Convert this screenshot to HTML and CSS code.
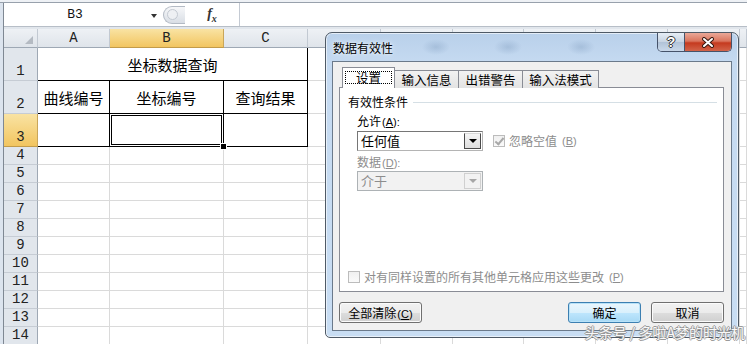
FILE: index.html
```html
<!DOCTYPE html>
<html lang="zh-CN">
<head>
  <meta charset="UTF-8">
  <meta name="viewport" content="width=device-width, initial-scale=1">
  <title>数据有效性</title>
  <link rel="stylesheet" href="styles.css">
</head>
<body>
<div class="app">
  <div class="topline"></div>
  <div class="main">
    <div class="formula">
      <div class="namebox">B3</div>
      <div class="grip"><span class="grip-dot"></span></div>
      <div class="fx"><i>f</i><sub>x</sub></div>
      <div class="input"></div>
    </div>
    <div class="gap"></div>

    <div class="sheet">
      <!-- 列标题 -->
      <div class="hd corner"></div>
      <div class="hd">A</div>
      <div class="hd on">B</div>
      <div class="hd">C</div>
      <div class="hd"></div><div class="hd"></div><div class="hd"></div><div class="hd"></div><div class="hd"></div><div class="hd"></div><div class="hd"></div>

      <!-- 第1行 -->
      <div class="rh">1</div>
      <div class="cell t merged">坐标数据查询</div>
      <div></div><div></div><div></div><div></div><div></div><div></div><div></div>

      <!-- 第2行 -->
      <div class="rh">2</div>
      <div class="cell t">曲线编号</div>
      <div class="cell t">坐标编号</div>
      <div class="cell t">查询结果</div>
      <div></div><div></div><div></div><div></div><div></div><div></div><div></div>

      <!-- 第3行 -->
      <div class="rh on">3</div>
      <div class="cell t"></div>
      <div class="cell t sel"></div>
      <div class="cell t"></div>
      <div></div><div></div><div></div><div></div><div></div><div></div><div></div>

      <div class="rh">4</div><div></div><div></div><div></div><div></div><div></div><div></div><div></div><div></div><div></div><div></div>
      <div class="rh">5</div><div></div><div></div><div></div><div></div><div></div><div></div><div></div><div></div><div></div><div></div>
      <div class="rh">6</div><div></div><div></div><div></div><div></div><div></div><div></div><div></div><div></div><div></div><div></div>
      <div class="rh">7</div><div></div><div></div><div></div><div></div><div></div><div></div><div></div><div></div><div></div><div></div>
      <div class="rh">8</div><div></div><div></div><div></div><div></div><div></div><div></div><div></div><div></div><div></div><div></div>
      <div class="rh">9</div><div></div><div></div><div></div><div></div><div></div><div></div><div></div><div></div><div></div><div></div>
      <div class="rh">10</div><div></div><div></div><div></div><div></div><div></div><div></div><div></div><div></div><div></div><div></div>
      <div class="rh">11</div><div></div><div></div><div></div><div></div><div></div><div></div><div></div><div></div><div></div><div></div>
      <div class="rh">12</div><div></div><div></div><div></div><div></div><div></div><div></div><div></div><div></div><div></div><div></div>
      <div class="rh">13</div><div></div><div></div><div></div><div></div><div></div><div></div><div></div><div></div><div></div><div></div>
      <div class="rh">14</div><div></div><div></div><div></div><div></div><div></div><div></div><div></div><div></div><div></div><div></div>
    </div>
  </div>

  <!-- 数据有效性 对话框 -->
  <div class="dialog">
    <div class="titlebar">
      <span class="title">数据有效性</span>
      <div class="caption-btns">
        <span class="cb help">?</span>
        <span class="cb close">
          <svg width="14" height="11" viewBox="0 0 14 11">
            <path d="M3 2 L11 9 M11 2 L3 9" stroke="#3a1a12" stroke-width="4" stroke-linecap="round"/>
            <path d="M3 2 L11 9 M11 2 L3 9" stroke="#fff" stroke-width="2" stroke-linecap="round"/>
          </svg>
        </span>
      </div>
    </div>

    <div class="client">
      <div class="tabs">
        <span class="tab active"><span class="focus">设置</span></span>
        <span class="tab w4">输入信息</span>
        <span class="tab w4">出错警告</span>
        <span class="tab w5">输入法模式</span>
      </div>

      <div class="panel">
        <div class="group"><span>有效性条件</span><span class="rule"></span></div>
        <div class="fields">
          <div class="label">允许<span class="key">(<u>A</u>):</span></div>
          <div class="field-row">
            <div class="combo"><span class="value">任何值</span><span class="drop"></span></div>
            <div class="check off"><span class="box checked"></span>忽略空值<span class="key">(<u>B</u>)</span></div>
          </div>
          <div class="label off">数据<span class="key">(<u>D</u>):</span></div>
          <div class="combo off"><span class="value">介于</span><span class="drop"></span></div>
        </div>
        <div class="check off apply"><span class="box"></span>对有同样设置的所有其他单元格应用这些更改<span class="key">(<u>P</u>)</span></div>
      </div>

      <div class="buttons">
        <button class="btn wide">全部清除<span class="key">(<u>C</u>)</span></button>
        <button class="btn default">确定</button>
        <button class="btn">取消</button>
      </div>
    </div>
  </div>

  <div class="watermark">头条号 / 多啦A梦的时光机</div>
</div>
</body>
</html>
```

FILE: styles.css
```css
body {
  margin: 0;
  background: #fff;
}

.app {
  position: relative;
  width: 747px;
  height: 344px;
  overflow: hidden;
  background: #dce4ee;
  font-family: "Noto Sans CJK SC", sans-serif;
}

/* --- 编辑栏 --- */
.topline {
  height: 2px;
  background: #eef1f5;
  border-bottom: 1px solid #98a1ac;
}

.main {
  margin-left: 3px;
  border-left: 1px solid #7f8893;
  background: #fff;
}

.formula {
  display: flex;
  align-items: center;
  height: 23px;
  background: #fff;
  border-bottom: 1px solid #b7bec7;
}

.namebox {
  position: relative;
  width: 142px;
  padding-right: 14px;
  text-align: center;
  font: 13px "Liberation Mono", monospace;
  color: #111;
}

.namebox::after {
  content: "";
  position: absolute;
  right: 3px;
  top: 7px;
  border-left: 3px solid transparent;
  border-right: 3px solid transparent;
  border-top: 4px solid #333;
}

.grip {
  width: 22px;
  height: 18px;
  margin-left: 3px;
  border: 1px solid #b3bac4;
  border-right: none;
  border-radius: 10px 0 0 10px;
  background: linear-gradient(#f6f7f9, #d9dee5);
  display: flex;
  align-items: center;
  padding-left: 3px;
  box-sizing: border-box;
}

.grip-dot {
  width: 9px;
  height: 9px;
  border-radius: 50%;
  border: 1px solid #c3c9d1;
  background: #eef0f3;
}

.fx {
  width: 54px;
  text-align: center;
  font: bold 14px "Liberation Serif", serif;
  color: #333;
}

.fx sub {
  font-size: 10px;
  font-style: italic;
}

.input {
  flex: 1;
  align-self: stretch;
  border-left: 1px solid #c4cad3;
}

.gap {
  height: 2px;
  background: #e1e6ec;
}

/* --- 工作表网格 --- */
.sheet {
  display: grid;
  grid-template-columns: 34px 72px 114px 84px 73px 72px 71px 72px 72px 72px 1fr;
  grid-template-rows: 19px 33px 33px 33px repeat(11, 18px);
  background: #fff;
}

.sheet > div {
  box-sizing: border-box;
  border-right: 1px solid #dadada;
  border-bottom: 1px solid #dadada;
}

.sheet > .hd {
  background: linear-gradient(#eef1f5, #dfe4ea);
  border-right-color: #c2c9d2;
  border-bottom-color: #9ea8b4;
  font: 14px "Liberation Mono", monospace;
  color: #222;
  display: flex;
  align-items: center;
  justify-content: center;
}

.sheet > .corner {
  position: relative;
}

.corner::after {
  content: "";
  position: absolute;
  right: 4px;
  bottom: 3px;
  border-left: 8px solid transparent;
  border-bottom: 8px solid #b4bac2;
}

.sheet > .rh {
  background: #e1e6ec;
  border-right-color: #9ea8b4;
  border-bottom-color: #c6ccd4;
  font: 14px "Liberation Mono", monospace;
  color: #222;
  display: flex;
  align-items: flex-end;
  justify-content: center;
  line-height: 17px;
}

.sheet > .on {
  background: linear-gradient(#f9e3a3, #f2c560);
  border-bottom-color: #c29b4a;
  border-right-color: #c9a65a;
}

.sheet > .cell {
  display: flex;
  align-items: center;
  justify-content: center;
  font-size: 15px;
  color: #000;
}

.sheet > .t {
  border-right-color: #000;
  border-bottom-color: #000;
}

.merged {
  grid-column: span 3;
}

.sel {
  position: relative;
}

.sel::before {
  content: "";
  position: absolute;
  top: 1px;
  left: 1px;
  right: 1px;
  bottom: 1px;
  border: 1px solid #000;
}

.sel::after {
  content: "";
  position: absolute;
  right: -3px;
  bottom: -3px;
  width: 5px;
  height: 5px;
  background: #000;
  box-shadow: 0 0 0 1px #fff;
  z-index: 1;
}

/* --- 对话框 --- */
.dialog {
  position: absolute;
  left: 325px;
  top: 32px;
  width: 414px;
  height: 306px;
  box-sizing: border-box;
  border: 1px solid #4f5a66;
  border-radius: 7px 7px 5px 5px;
  padding: 0 6px 6px;
  display: flex;
  flex-direction: column;
  background:
    radial-gradient(ellipse 14px 8px at 110px 14px, rgba(120, 150, 185, 0.35), transparent),
    radial-gradient(ellipse 14px 8px at 182px 14px, rgba(120, 150, 185, 0.35), transparent),
    radial-gradient(ellipse 14px 8px at 255px 14px, rgba(120, 150, 185, 0.35), transparent),
    linear-gradient(#b9d0ea, #c5daf1 30px, #c8ddf3);
  box-shadow: inset 0 0 0 1px rgba(255, 255, 255, 0.6);
  z-index: 2;
}

.titlebar {
  position: relative;
  height: 28px;
  display: flex;
  align-items: center;
}

.title {
  padding-left: 1px;
  font-size: 12px;
  color: #000;
  text-shadow: 0 0 6px #e8f2fc, 0 0 3px #fff;
}

.caption-btns {
  position: absolute;
  top: 0;
  right: 0;
  display: flex;
  height: 18px;
  border: 1px solid #46536a;
  border-top: none;
  border-radius: 0 0 5px 5px;
  overflow: hidden;
}

.cb {
  display: flex;
  align-items: center;
  justify-content: center;
}

.help {
  width: 26px;
  border-right: 1px solid #46536a;
  background: linear-gradient(#e6edf5, #c6d3e2 50%, #b1c3d8 51%, #c9d8ea);
  font: bold 14px "Liberation Sans", sans-serif;
  color: #fff;
  text-shadow: 1px 0 #333, -1px 0 #333, 0 1px #333, 0 -1px #333;
}

.close {
  width: 46px;
  background: linear-gradient(#eaa898, #d9755e 45%, #c53a1f 55%, #d2644a);
}

.client {
  flex: 1;
  display: flex;
  flex-direction: column;
  border: 1px solid #6b7a8b;
  background: #f0f0f0;
  padding: 6px 7px 0 6px;
  font-size: 12px;
  line-height: 14px;
  color: #000;
}

.key {
  font-family: "Liberation Sans", sans-serif;
  font-size: 11px;
  margin-left: 1px;
}

/* 选项卡 */
.tabs {
  display: flex;
  align-items: flex-end;
  height: 20px;
  margin-bottom: -1px;
  padding-left: 3px;
  position: relative;
  z-index: 1;
}

.tab {
  height: 18px;
  box-sizing: border-box;
  border: 1px solid #898c95;
  border-bottom: none;
  margin-left: -1px;
  background: linear-gradient(#f2f2f2, #e3e3e3);
  display: flex;
  align-items: center;
  justify-content: center;
  font-size: 12.5px;
}

.tab.w4 { width: 65px; }
.tab.w5 { width: 77px; }

.tab.active {
  width: 53px;
  height: 21px;
  margin-left: 0;
  background: #fff;
  position: relative;
  z-index: 1;
  padding-bottom: 2px;
}

.focus {
  border: 1px dotted #000;
  padding: 0 10px;
  line-height: 11px;
  height: 11px;
}

.panel {
  height: 205px;
  box-sizing: border-box;
  border: 1px solid #898c95;
  background: #fff;
  padding: 7px 6px 7px 8px;
  display: flex;
  flex-direction: column;
}

.group {
  display: flex;
  align-items: center;
}

.rule {
  flex: 1;
  height: 1px;
  margin-left: 5px;
  background: #d5dfe5;
}

.fields {
  padding-left: 9px;
}

.label {
  margin-top: 5px;
}

.label + .combo {
  margin-top: 1px;
}

.field-row {
  display: flex;
  align-items: center;
  margin-top: 2px;
}

.field-row + .label {
  margin-top: 4px;
}

.off {
  color: #8d8d8d;
}

.combo {
  width: 126px;
  height: 20px;
  box-sizing: border-box;
  border: 1px solid #767676;
  border-right-color: #b4b4b4;
  border-bottom-color: #b4b4b4;
  background: #fff;
  display: flex;
  align-items: center;
  padding: 0 1px 0 3px;
}

.value {
  flex: 1;
  font-size: 13px;
}

.drop {
  position: relative;
  width: 17px;
  height: 16px;
  box-sizing: border-box;
  border: 1px solid #4a4a4a;
  border-top-color: #d8d8d8;
  background: linear-gradient(#f5f5f5, #dedede);
}

.drop::after {
  content: "";
  position: absolute;
  left: 4px;
  top: 5px;
  border-left: 4px solid transparent;
  border-right: 4px solid transparent;
  border-top: 4px solid #000;
}

.combo.off {
  background: #f2f2f2;
  border-color: #adb2b5;
}

.combo.off .drop {
  border-color: #d0d0d0;
  background: #f2f2f2;
}

.combo.off .drop::after {
  border-top-color: #a6a6a6;
}

.check {
  display: flex;
  align-items: center;
  gap: 4px;
  margin-left: 10px;
}

.box {
  position: relative;
  width: 12px;
  height: 12px;
  box-sizing: border-box;
  border: 1px solid #bcbcbc;
  background: linear-gradient(#f0f0f0, #fafafa);
}

.box.checked::after {
  content: "";
  position: absolute;
  left: 3px;
  top: 0;
  width: 3px;
  height: 7px;
  border-right: 2px solid #a8a8a8;
  border-bottom: 2px solid #a8a8a8;
  transform: rotate(40deg);
}

.check.apply {
  margin: auto 0 0 0;
}

/* 按钮 */
.buttons {
  display: flex;
  margin-top: 10px;
}

.btn {
  width: 73px;
  height: 21px;
  padding: 0;
  font: 12px "Noto Sans CJK SC", sans-serif;
  color: #000;
  border: 1px solid #707070;
  border-radius: 3px;
  background: linear-gradient(#f2f2f2, #ebebeb 50%, #dddddd 51%, #cfcfcf);
  box-shadow: inset 0 0 0 1px #fbfbfb;
}

.btn.wide {
  width: 83px;
  margin-right: auto;
}

.btn.default {
  border-color: #3c7fb1;
  background: linear-gradient(#eaf6fd, #d9f0fc 50%, #bee6fd 51%, #a7d9f5);
  box-shadow: inset 0 0 0 1px #b8e2f8;
  margin-right: 10px;
}

/* 水印 */
.watermark {
  position: absolute;
  right: 2px;
  bottom: 4px;
  z-index: 3;
  font-size: 14px;
  line-height: 15px;
  color: rgba(255, 255, 255, 0.95);
  text-shadow: 1px 0 #9a9a9a, -1px 0 #9a9a9a, 0 1px #9a9a9a, 0 -1px #9a9a9a;
}
```
